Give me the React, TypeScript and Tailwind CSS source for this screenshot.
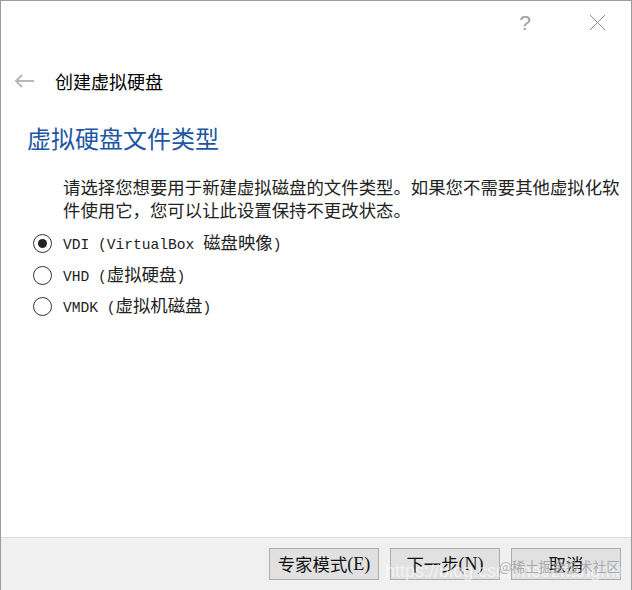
import React from 'react';

const CJK = "font-['Noto_Sans_CJK_SC',sans-serif]";

// latin runs in a narrow mono face, everything else in the CJK face
const Mixed: React.FC<{ text: string; latin?: string }> = ({ text, latin }) => {
  const parts = text.split(/([\x00-\x7F]+)/).filter(Boolean);
  return (
    <>
      {parts.map((p, i) =>
        /^[\x00-\x7F]+$/.test(p) ? (
          <span
            key={i}
            className={latin ?? "font-['Liberation_Mono',monospace] text-[14.6px] whitespace-pre"}
          >
            {p}
          </span>
        ) : (
          <span key={i}>{p}</span>
        )
      )}
    </>
  );
};

const Radio: React.FC<{ checked?: boolean; label: string }> = ({ checked, label }) => (
  <div className="flex items-center h-[31.5px]">
    <div className="w-[62px] flex justify-center pl-[22px] pr-[2px]">
      <div className="w-[19px] h-[19px] rounded-full border border-[#333] bg-white flex items-center justify-center">
        {checked && <div className="w-[9px] h-[9px] rounded-full bg-[#222]" />}
      </div>
    </div>
    <div className="text-[17.4px] leading-[23px] text-[#222]">
      <Mixed text={label} />
    </div>
  </div>
);

const Button: React.FC<{ label: string }> = ({ label }) => (
  <div className="w-[110px] h-[32px] border border-[#adadad] bg-[#e1e1e1] flex items-center justify-center text-[17.4px] text-[#111]">
    <Mixed text={label} latin="font-['Liberation_Serif',serif] text-[18px]" />
  </div>
);

export default function App() {
  return (
    <div className={`relative w-[632px] h-[590px] bg-white border border-b-0 border-[#9c9c9c] flex flex-col ${CJK}`}>
      {/* title bar */}
      <div className="h-[44px] flex items-center justify-end pr-[25px] gap-[58px]">
        <span className="font-['Liberation_Sans',sans-serif] text-[21px] font-light text-[#a0a0a0] leading-none -mt-[1px]">
          ?
        </span>
        <svg width="17" height="17" viewBox="0 0 17 17" className="-mt-[1px]">
          <path d="M1 1 L16 16 M16 1 L1 16" stroke="#8a8a8a" strokeWidth="1" fill="none" />
        </svg>
      </div>

      {/* wizard header */}
      <div className="h-[72px] flex items-center">
        <div className="w-[54px] pl-[13px]">
          <svg width="21" height="14" viewBox="0 0 21 14">
            <path d="M20 7 H2 M8 1 L2 7 L8 13" stroke="#b8b8b8" strokeWidth="2" fill="none" />
          </svg>
        </div>
        <span className="text-[18px] text-black leading-none">创建虚拟硬盘</span>
      </div>

      <div className="mt-[5px] pl-[26px] text-[24px] leading-[32px] text-[#1e56a3]">虚拟硬盘文件类型</div>

      <div className="mt-[21px] pl-[62px] text-[17.4px] leading-[23px] text-[#222]">
        <div>请选择您想要用于新建虚拟磁盘的文件类型。如果您不需要其他虚拟化软</div>
        <div>件使用它，您可以让此设置保持不更改状态。</div>
      </div>

      <div className="mt-[7px] flex flex-col">
        <Radio checked label="VDI (VirtualBox 磁盘映像)" />
        <Radio label="VHD (虚拟硬盘)" />
        <Radio label="VMDK (虚拟机磁盘)" />
      </div>

      <div className="flex-1" />

      {/* footer */}
      <div className="h-[53px] border-t border-[#dcdcdc] bg-[#f0f0f0] flex justify-end gap-[11px] pt-[10px] pr-[10px]">
        <Button label="专家模式(E)" />
        <Button label="下一步(N)" />
        <Button label="取消" />
      </div>

      {/* watermark */}
      <div className="absolute left-[384px] top-[557px] w-[236px] overflow-hidden font-['Liberation_Sans',sans-serif] text-[18px] text-white/60 whitespace-nowrap pointer-events-none">
        https://blog.csdn.net/zhangmin0
      </div>
      <div className="absolute left-[498px] top-[555px] text-[13.5px] text-[#9a9a9a]/80 whitespace-nowrap pointer-events-none">
        @稀土掘金技术社区
      </div>
    </div>
  );
}
